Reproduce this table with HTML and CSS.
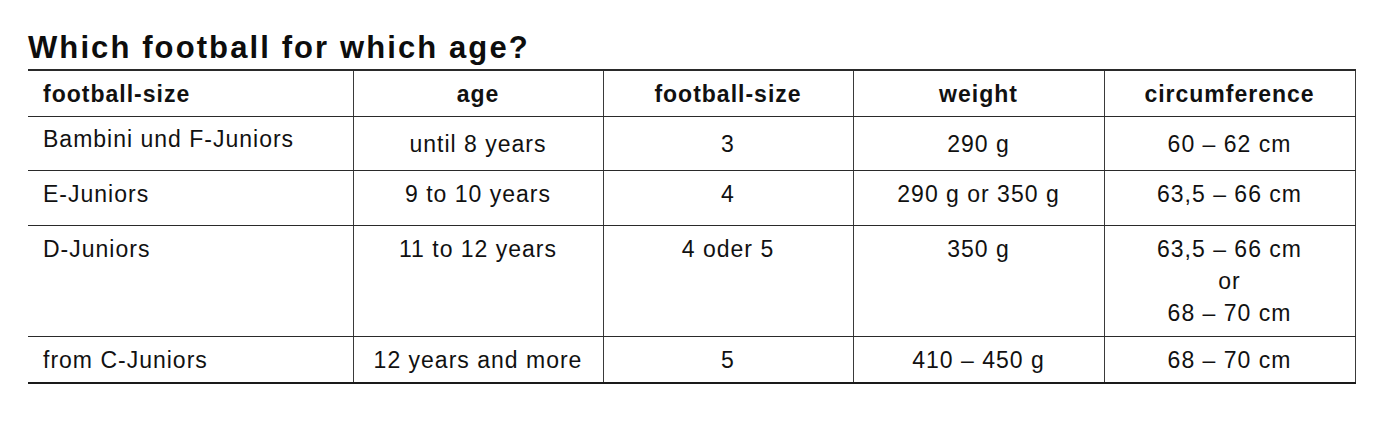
FILE: index.html
```html
<!DOCTYPE html>
<html>
<head>
<meta charset="utf-8">
<link rel="stylesheet" href="styles.css">
</head>
<body>
<div class="page">
  <h1 class="title">Which football for which age?</h1>
  <table class="sizes">
    <colgroup>
      <col class="c1"><col class="c2"><col class="c3"><col class="c4"><col class="c5">
    </colgroup>
    <thead>
      <tr class="r-head">
        <th class="first">football-size</th>
        <th>age</th>
        <th>football-size</th>
        <th>weight</th>
        <th>circumference</th>
      </tr>
    </thead>
    <tbody>
      <tr class="r1">
        <td class="first raised">Bambini und F-Juniors</td>
        <td>until 8 years</td>
        <td>3</td>
        <td>290 g</td>
        <td>60 – 62 cm</td>
      </tr>
      <tr class="r2">
        <td class="first">E-Juniors</td>
        <td>9 to 10 years</td>
        <td>4</td>
        <td>290 g or 350 g</td>
        <td>63,5 – 66 cm</td>
      </tr>
      <tr class="r3">
        <td class="first">D-Juniors</td>
        <td>11 to 12 years</td>
        <td>4 oder 5</td>
        <td>350 g</td>
        <td>63,5 – 66 cm<br>or<br>68 – 70 cm</td>
      </tr>
      <tr class="r4">
        <td class="first">from C-Juniors</td>
        <td>12 years and more</td>
        <td>5</td>
        <td>410 – 450 g</td>
        <td>68 – 70 cm</td>
      </tr>
    </tbody>
  </table>
</div>
</body>
</html>
```
FILE: styles.css
```css
html, body {
  margin: 0;
  padding: 0;
  background: #ffffff;
}
body {
  font-family: "Liberation Sans", Arial, Helvetica, sans-serif;
  color: #111111;
}
.page {
  padding: 30px 38px 0 28px;
}
.title {
  margin: 0 0 3px 0;
  font-size: 31px;
  line-height: 36px;
  font-weight: bold;
  letter-spacing: 2.1px;
  color: #0d0d0d;
}
.sizes {
  border-collapse: collapse;
  table-layout: fixed;
  width: 1327px;
  font-size: 23px;
  line-height: 32px;
  letter-spacing: 1px;
}
.c1 { width: 325px; }
.c2 { width: 250px; }
.c3 { width: 250px; }
.c4 { width: 251px; }
.c5 { width: 251px; }
.sizes th,
.sizes td {
  padding: 7px 0 0 0;
  vertical-align: top;
  text-align: center;
  border-left: 1px solid #3a3a3a;
  border-right: 1px solid #3a3a3a;
  border-top: 1.5px solid #2a2a2a;
  border-bottom: 1.5px solid #2a2a2a;
  white-space: nowrap;
}
.sizes th {
  font-weight: bold;
  border-top: 2px solid #2a2a2a;
}
.sizes .first {
  text-align: left;
  padding-left: 15px;
  border-left: none;
}
.r4 td {
  border-bottom: 2px solid #1a1a1a;
}
.r-head { height: 46px; }
.r1 { height: 54px; }
.r1 td { padding-top: 11px; }
.r1 td.raised { padding-top: 6px; }
.r2 { height: 55px; }
.r3 { height: 111px; }
.r4 { height: 47px; }
```
